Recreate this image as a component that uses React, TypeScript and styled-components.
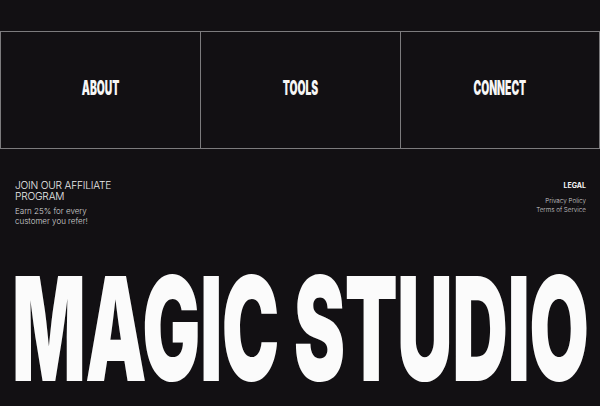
import React from "react";
import styled, { createGlobalStyle } from "styled-components";

const Global = createGlobalStyle`
  html, body { margin: 0; padding: 0; background: #121013; }
  body { width: 600px; min-height: 406px; font-family: Inter, "Noto Sans", sans-serif; color: #f4f4f4; }
  * { box-sizing: border-box; }
`;

const Page = styled.div`
  width: 600px;
  height: 406px;
  background: #121013;
  display: flex;
  flex-direction: column;
  padding-top: 31px;
`;

const NavGrid = styled.nav`
  display: grid;
  grid-template-columns: repeat(3, 1fr);
  height: 118px;
  border: 1px solid #7c7b7d;
`;

const NavCell = styled.a<{ $first?: boolean }>`
  display: flex;
  align-items: center;
  justify-content: center;
  border-left: ${(p) => (p.$first ? "none" : "1px solid #7c7b7d")};
  color: #f6f6f6;
  text-decoration: none;
`;

const NavLabel = styled.span`
  display: inline-block;
  font-family: Inter, "Liberation Sans", sans-serif;
  font-weight: 900;
  font-size: 19.5px;
  line-height: 1;
  transform: scaleX(0.53);
  margin-bottom: 2px;
`;

const Footer = styled.footer`
  display: flex;
  justify-content: space-between;
  align-items: flex-start;
  padding: 31px 14px 0 15px;
`;

const Affiliate = styled.div`
  display: flex;
  flex-direction: column;
  gap: 6px;
`;

const AffTitle = styled.div`
  font-family: Inter, sans-serif;
  font-weight: 300;
  font-size: 10.2px;
  line-height: 10.5px;
  color: #ececec;
  letter-spacing: -0.2px;
`;

const AffText = styled.div`
  font-family: Inter, sans-serif;
  font-weight: 300;
  font-size: 8px;
  line-height: 9.5px;
  color: #d8d8d8;
`;

const Legal = styled.div`
  display: flex;
  flex-direction: column;
  align-items: flex-end;
  padding-top: 2px;
`;

const LegalHead = styled.div`
  font-family: Inter, sans-serif;
  font-weight: 700;
  font-size: 7px;
  line-height: 8px;
  color: #f6f6f6;
  margin-bottom: 7px;
`;

const LegalLink = styled.a`
  font-family: Inter, sans-serif;
  font-weight: 300;
  font-size: 6.3px;
  line-height: 8.5px;
  color: #cfcfcf;
  text-decoration: none;
`;

const Brand = styled.div`
  margin-top: 38px;
  padding-left: 12px;
  white-space: nowrap;
  width: 600px;
`;

const BrandText = styled.span`
  display: inline-block;
  font-family: Inter, "Liberation Sans", sans-serif;
  font-weight: 900;
  font-size: 145px;
  line-height: 130px;
  color: #fbfbfb;
  letter-spacing: -1px;
  transform-origin: left center;
  transform: scaleX(0.532);
  margin-right: -600px;
`;

export default function App() {
  return (
    <>
      <Global />
      <Page>
        <NavGrid>
          <NavCell $first href="#">
            <NavLabel>ABOUT</NavLabel>
          </NavCell>
          <NavCell href="#">
            <NavLabel>TOOLS</NavLabel>
          </NavCell>
          <NavCell href="#">
            <NavLabel>CONNECT</NavLabel>
          </NavCell>
        </NavGrid>
        <Footer>
          <Affiliate>
            <AffTitle>
              JOIN OUR AFFILIATE
              <br />
              PROGRAM
            </AffTitle>
            <AffText>
              Earn 25% for every
              <br />
              customer you refer!
            </AffText>
          </Affiliate>
          <Legal>
            <LegalHead>LEGAL</LegalHead>
            <LegalLink href="#">Privacy Policy</LegalLink>
            <LegalLink href="#">Terms of Service</LegalLink>
          </Legal>
        </Footer>
        <Brand>
          <BrandText>MAGIC STUDIO</BrandText>
        </Brand>
      </Page>
    </>
  );
}
